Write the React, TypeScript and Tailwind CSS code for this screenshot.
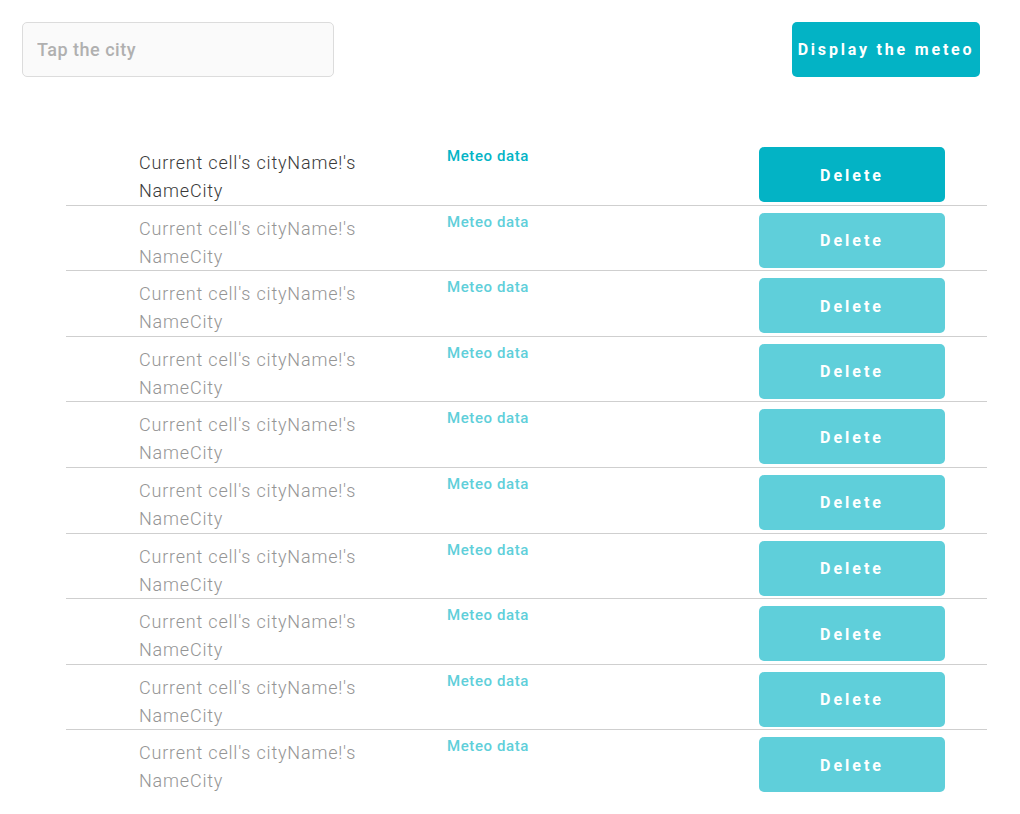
import { useState } from 'react';

const cities = Array.from({ length: 10 }, (_, i) => ({ id: i, name: "Current cell's cityName!'s NameCity" }));

export default function App() {
  const [city, setCity] = useState('');

  return (
    <div className="min-h-[814px] w-[1020px] bg-white font-['Roboto',sans-serif]">
      <header className="flex items-start justify-between pl-[22px] pr-[40px] pt-[22px]">
        <input
          value={city}
          onChange={(e) => setCity(e.target.value)}
          placeholder="Tap the city"
          className="h-[55px] w-[312px] rounded-[5px] border border-[#dcdcdc] bg-[#fafafa] px-[14px] text-[18px] font-medium tracking-[0.5px] text-[#555] outline-none placeholder:text-[#b0b0b0]"
        />
        <button
          type="button"
          className="h-[55px] w-[188px] rounded-[5px] bg-[#03b3c5] pt-[1px] text-[16px] font-bold tracking-[2.8px] text-white"
        >
          Display the meteo
        </button>
      </header>

      <ul className="ml-[66px] mt-[63px] w-[921px]">
        {cities.map((item, index) => {
          const active = index === 0;
          return (
            <li
              key={item.id}
              className="flex h-[65.6px] border-b border-[#cfcfcf] last:border-b-0"
            >
              <p
                className={`ml-[73px] mt-[9px] w-[240px] text-[18px] leading-[28px] font-light tracking-[0.8px] ${
                  active ? 'text-[#3a3a3a]' : 'text-[#959595]'
                }`}
              >
                {item.name}
              </p>
              <p
                className={`ml-[68px] mt-[7px] w-[120px] text-[15px] leading-[18px] font-medium tracking-[0.6px] ${
                  active ? 'text-[#04b4c6]' : 'text-[#5fcfda]'
                }`}
              >
                Meteo data
              </p>
              <button
                type="button"
                className={`ml-[192px] mt-[7px] h-[55px] w-[186px] rounded-[5px] pt-[2px] text-[16px] font-bold tracking-[3px] text-white ${
                  active ? 'bg-[#03b3c5]' : 'bg-[#5fcfda]'
                }`}
              >
                Delete
              </button>
            </li>
          );
        })}
      </ul>
    </div>
  );
}
